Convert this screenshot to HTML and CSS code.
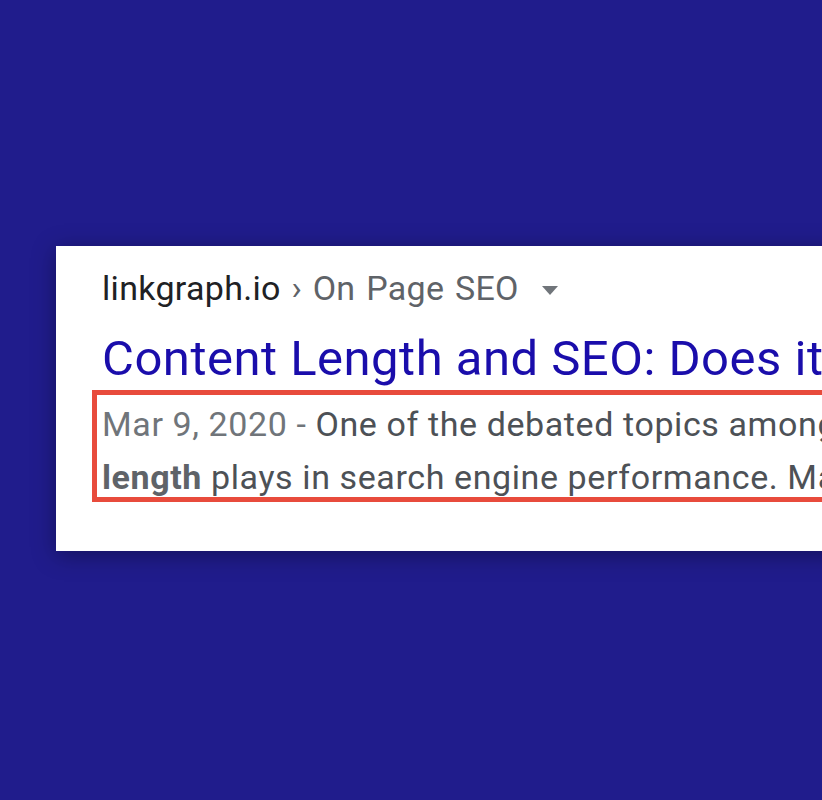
FILE: index.html
```html
<!DOCTYPE html>
<html lang="en">
<head>
    <meta charset="UTF-8">
    <meta name="viewport" content="width=device-width, initial-scale=1.0">
    <title>Content Length and SEO</title>
    <link rel="stylesheet" href="styles.css">
</head>
<body>
    <div class="card">
        <div class="crumb">
            <span class="site">linkgraph.io</span>
            <span class="path">› On Page SEO</span>
            <span class="caret"></span>
        </div>
        <div class="title">Content Length and SEO: Does it Matter?</div>
        <div class="snippet">
            <span class="date">Mar 9, 2020 - </span>One of the debated topics among SEO experts is the role content<br>
            <b>length</b> plays in search engine performance. Many studies have found
            <div class="highlight"></div>
        </div>
    </div>
</body>
</html>
```

FILE: styles.css
```css
body {
    margin: 0;
    padding: 246px 0 0 56px;
    height: 800px;
    box-sizing: border-box;
    background-color: #201c8c;
    font-family: Roboto, "Liberation Sans", Arial, sans-serif;
    overflow: hidden;
}
.card {
    width: 1100px;
    height: 305px;
    box-sizing: border-box;
    padding: 20px 0 0 46px;
    background-color: #ffffff;
    box-shadow: 0 4px 22px rgba(0, 0, 0, 0.35);
    white-space: nowrap;
}
.crumb {
    font-size: 34px;
    line-height: 44px;
    letter-spacing: 0.3px;
    word-spacing: 2px;
    color: #202124;
}
.path {
    color: #5f6368;
}
.caret {
    display: inline-block;
    margin-left: 12px;
    vertical-align: 5px;
    border-left: 8px solid transparent;
    border-right: 8px solid transparent;
    border-top: 9px solid #70757a;
}
.title {
    margin-top: 21px;
    font-size: 49px;
    line-height: 56px;
    letter-spacing: 0.5px;
    color: #1a0dab;
}
.snippet {
    position: relative;
    margin-top: 11px;
    font-size: 34px;
    line-height: 53px;
    letter-spacing: 0.6px;
    color: #4d5156;
}
.date {
    color: #70757a;
}
.snippet b {
    color: #5f6368;
}
.highlight {
    position: absolute;
    left: -10px;
    top: -8px;
    width: 1200px;
    height: 112px;
    box-sizing: border-box;
    border: 5px solid #e84b3c;
}
```
